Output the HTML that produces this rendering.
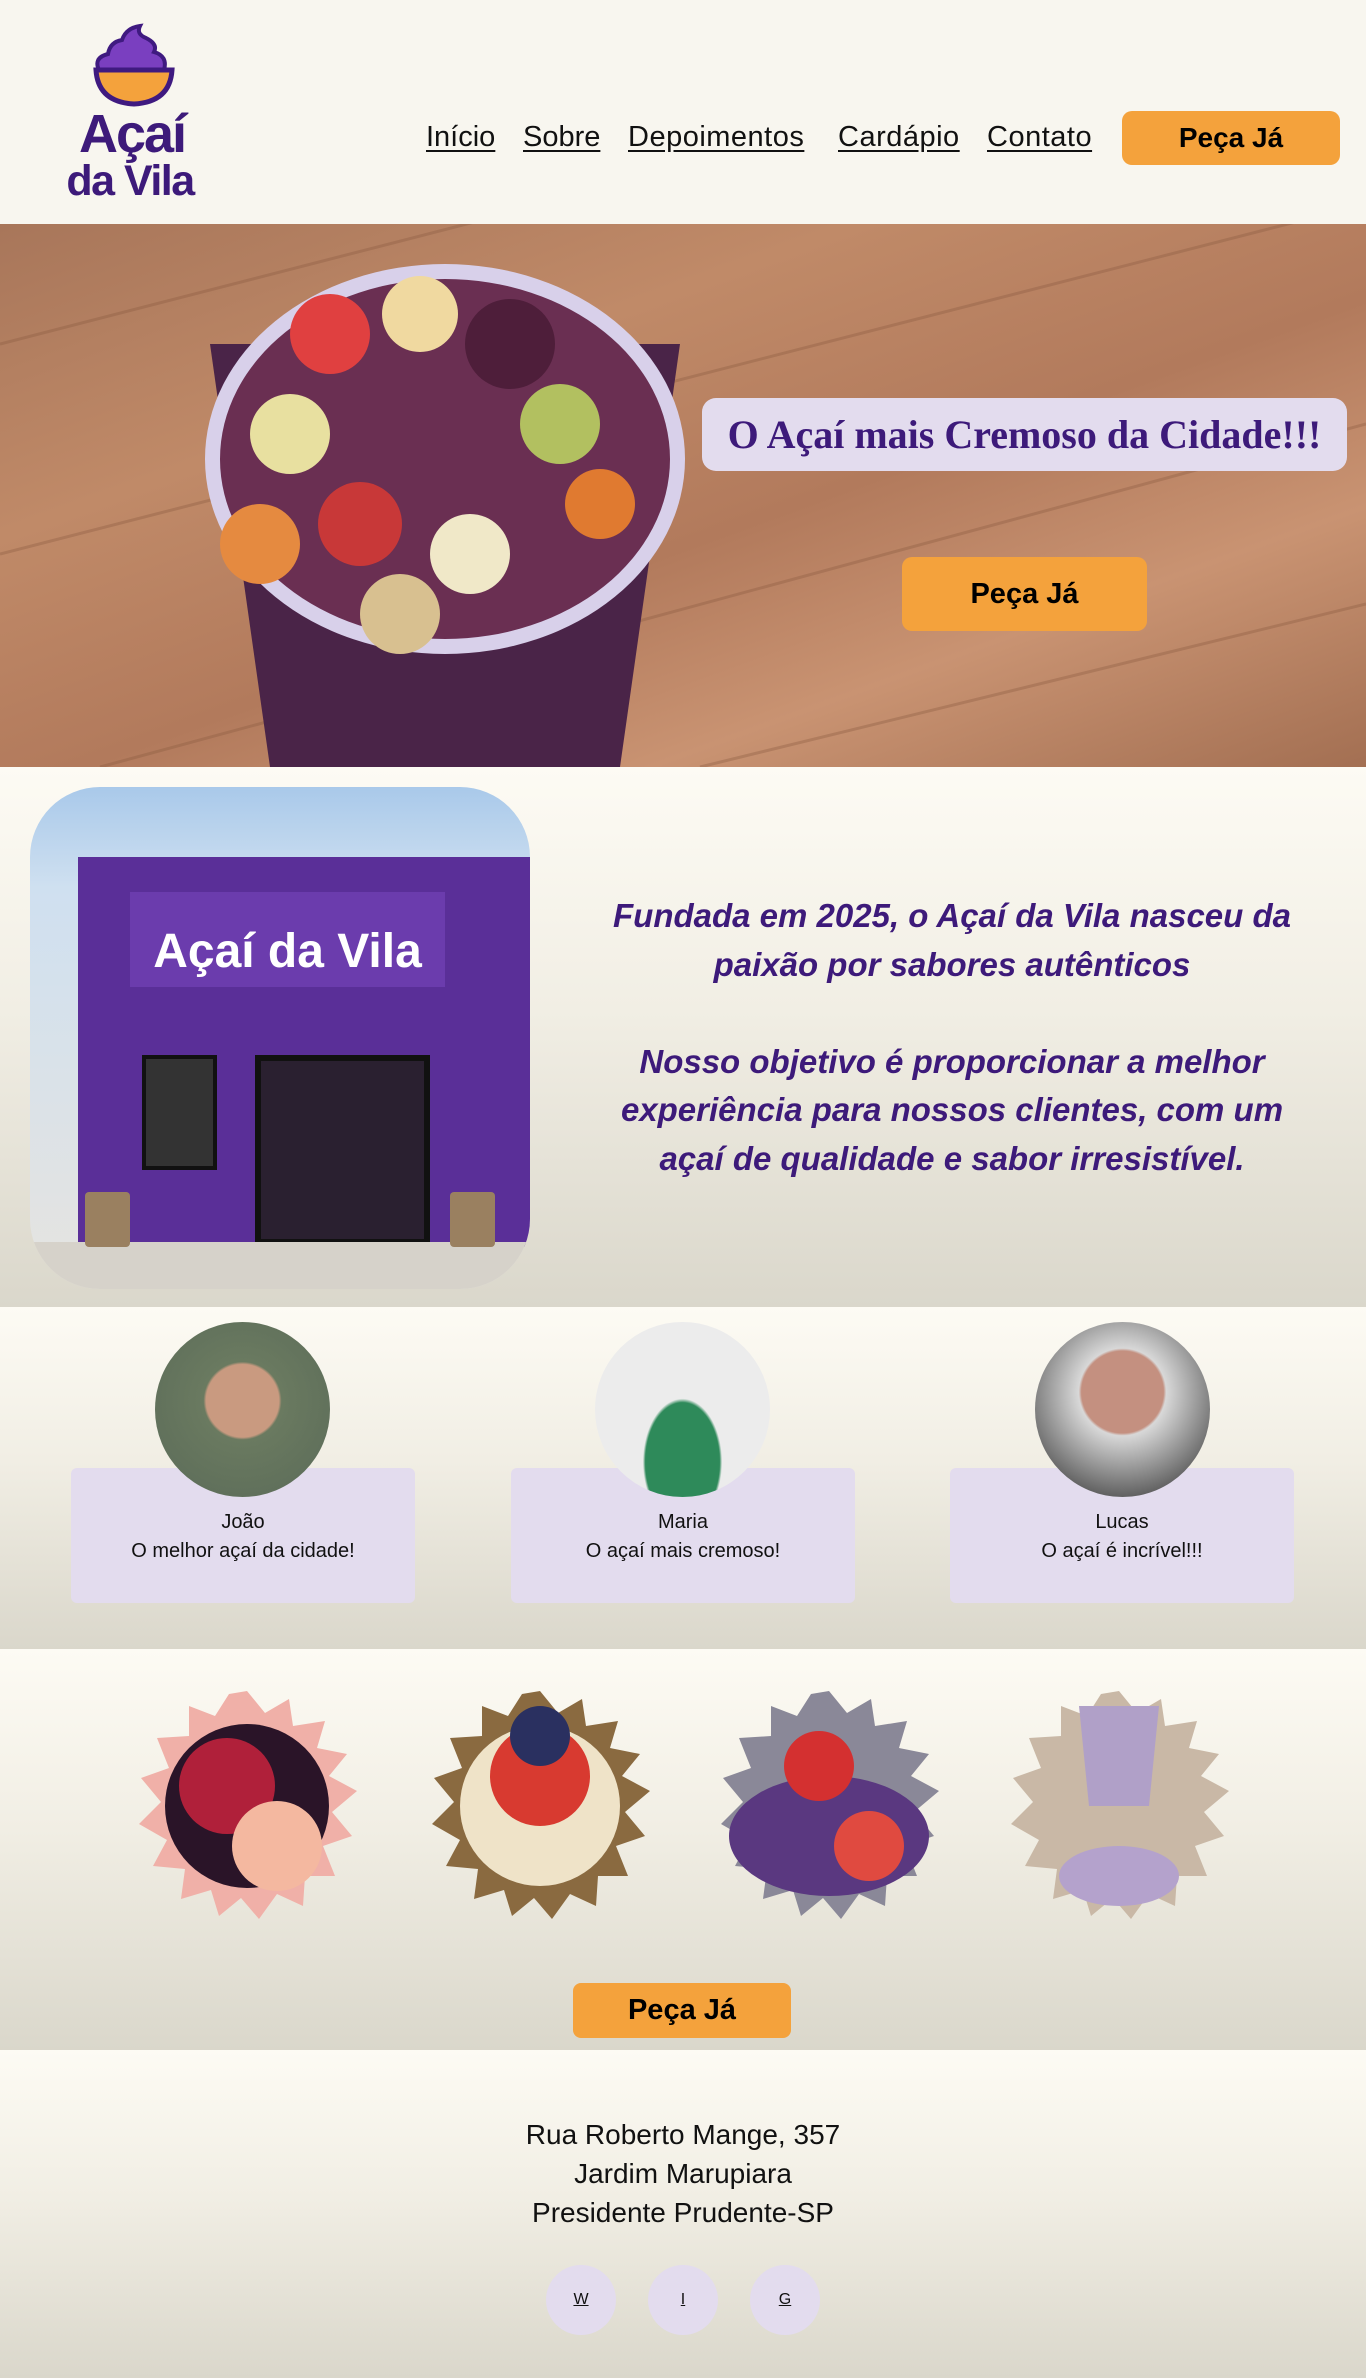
<!DOCTYPE html>
<html><head><meta charset="utf-8">
<style>
*{margin:0;padding:0;box-sizing:border-box}
body{width:1366px;height:2378px;overflow:hidden;font-family:"Liberation Sans",sans-serif;background:#fbf9f3;color:#000}
.sec{position:absolute;left:0;width:1366px}
nav a{position:absolute;top:121px;font-size:29px;color:#111;text-decoration:underline;text-underline-offset:4px}
.btn{position:absolute;background:#f4a23c;border-radius:10px;font-weight:bold;color:#000;display:flex;align-items:center;justify-content:center}
.hero{top:224px;height:543px;overflow:hidden;background:linear-gradient(160deg,#a8765a 0%,#c08a68 30%,#b27a5c 55%,#c99372 75%,#a36f52 100%)}
.grad{background:linear-gradient(180deg,#fdfbf4 0%,#f1eee4 45%,#dad7cb 100%)}
.card{position:absolute;top:1468px;width:344px;height:135px;background:#e3dcee;border-radius:6px;text-align:center;font-size:20px;line-height:29px;padding-top:40px;color:#111}
.av{position:absolute;top:1322px;width:175px;height:175px;border-radius:50%;overflow:hidden}
.soc{position:absolute;top:2265px;width:70px;height:70px;border-radius:50%;background:#e3dcee;display:flex;align-items:center;justify-content:center;font-size:16px;text-decoration:underline;color:#111}
</style></head><body>

<div class="sec" style="top:0;height:224px;background:#f8f6ef"></div>
<svg style="position:absolute;left:60px;top:20px" width="150" height="180" viewBox="0 0 150 180">
<path d="M40 52 Q32 38 48 34 Q50 22 62 20 Q66 8 80 6 Q76 14 86 18 Q98 24 94 32 Q108 36 104 50 Z" fill="#7a3fc0" stroke="#3f1a80" stroke-width="4"/>
<path d="M36 50 H112 Q110 82 74 84 Q38 82 36 50 Z" fill="#f4a23c" stroke="#3f1a80" stroke-width="5"/>
<text x="72" y="132" text-anchor="middle" font-family="Liberation Sans" font-weight="bold" font-size="54" letter-spacing="-2" fill="#3d1a7a">Açaí</text>
<text x="70" y="175" text-anchor="middle" font-family="Liberation Sans" font-weight="bold" font-size="43" letter-spacing="-1.5" fill="#3d1a7a">da Vila</text>
</svg>
<nav>
<a style="left:426px">Início</a>
<a style="left:523px">Sobre</a>
<a style="left:628px;letter-spacing:0.5px">Depoimentos</a>
<a style="left:838px;letter-spacing:0.5px">Cardápio</a>
<a style="left:987px;letter-spacing:0.5px">Contato</a>
</nav>
<div class="btn" style="left:1122px;top:111px;width:218px;height:54px;font-size:28px">Peça Já</div>

<div class="sec hero">
<svg width="1366" height="543" style="position:absolute;left:0;top:0">
<g stroke="#8a5a40" stroke-width="3" opacity=".35"><line x1="0" y1="120" x2="700" y2="-60"/><line x1="0" y1="330" x2="1366" y2="-20"/><line x1="100" y1="543" x2="1366" y2="200"/><line x1="700" y1="543" x2="1366" y2="380"/></g>
<path d="M210 120 L680 120 L620 543 L270 543 Z" fill="#4a2448"/>
<ellipse cx="445" cy="235" rx="240" ry="195" fill="#d8d0ea"/>
<ellipse cx="445" cy="235" rx="225" ry="180" fill="#6a2f52"/>
<circle cx="330" cy="110" r="40" fill="#e04040"/><circle cx="420" cy="90" r="38" fill="#f0d9a0"/><circle cx="510" cy="120" r="45" fill="#4e1e3a"/>
<circle cx="290" cy="210" r="40" fill="#e8e0a0"/><circle cx="360" cy="300" r="42" fill="#c83838"/><circle cx="560" cy="200" r="40" fill="#b2c060"/>
<circle cx="260" cy="320" r="40" fill="#e58a40"/><circle cx="470" cy="330" r="40" fill="#f0e8c8"/><circle cx="600" cy="280" r="35" fill="#e07a30"/><circle cx="400" cy="390" r="40" fill="#d8c090"/>
</svg>
<div style="position:absolute;left:702px;top:174px;width:645px;height:73px;background:#e3dcee;border-radius:14px;display:flex;align-items:center;justify-content:center;font-family:'Liberation Serif',serif;font-weight:bold;font-size:40px;color:#3d1a7a">O Açaí mais Cremoso da Cidade!!!</div>
<div class="btn" style="left:902px;top:333px;width:245px;height:74px;font-size:29px">Peça Já</div>
</div>

<div class="sec grad" style="top:767px;height:540px"></div>
<div style="position:absolute;left:30px;top:787px;width:500px;height:502px;border-radius:70px;overflow:hidden;background:linear-gradient(180deg,#a9c9ea 0%,#cfe0f0 20%,#e6e4e0 100%)">
<div style="position:absolute;left:48px;top:70px;width:455px;height:390px;background:#5a2f98"></div>
<div style="position:absolute;left:100px;top:105px;width:315px;height:95px;background:#6b3cad;color:#fff;font-weight:bold;font-size:48px;display:flex;align-items:flex-end;justify-content:center;padding-bottom:8px">Açaí da Vila</div>
<div style="position:absolute;left:225px;top:268px;width:175px;height:190px;background:#2a2030;border:6px solid #111"></div>
<div style="position:absolute;left:112px;top:268px;width:75px;height:115px;background:#333;border:4px solid #111"></div>
<div style="position:absolute;left:0;top:455px;width:500px;height:47px;background:#d6d2ca"></div>
<div style="position:absolute;left:55px;top:405px;width:45px;height:55px;background:#9a8060;border-radius:4px"></div>
<div style="position:absolute;left:420px;top:405px;width:45px;height:55px;background:#9a8060;border-radius:4px"></div>
</div>
<div style="position:absolute;left:597px;top:892px;width:710px;text-align:center;color:#3d1a7a;font-weight:bold;font-style:italic;font-size:33px;line-height:48.5px">Fundada em 2025, o Açaí da Vila nasceu da paixão por sabores autênticos<br><br>Nosso objetivo é proporcionar a melhor experiência para nossos clientes, com um açaí de qualidade e sabor irresistível.</div>

<div class="sec grad" style="top:1307px;height:342px"></div>
<div class="card" style="left:71px">João<br>O melhor açaí da cidade!</div>
<div class="card" style="left:511px">Maria<br>O açaí mais cremoso!</div>
<div class="card" style="left:950px">Lucas<br>O açaí é incrível!!!</div>
<div class="av" style="left:155px;background:radial-gradient(circle at 50% 45%,#c99a80 0 28%,#6a7a60 30%,#5a6a58 100%)"></div>
<div class="av" style="left:595px;background:radial-gradient(ellipse at 50% 80%,#2e8a5a 0 30%,#ececec 32%)"></div>
<div class="av" style="left:1035px;background:radial-gradient(circle at 50% 40%,#c49080 0 30%,#d8d8d8 32%,#222 100%)"></div>

<div class="sec grad" style="top:1649px;height:401px"></div>
<svg width="1366" height="260" style="position:absolute;left:0;top:1676px">
<defs><polygon id="s" points="0,-115 18,-93 42,-107 46,-80 78,-85 70,-58 100,-52 82,-30 110,-15 85,6 105,30 76,40 88,70 58,70 56,100 30,88 12,113 -6,92 -28,110 -36,84 -66,93 -62,63 -94,60 -80,34 -108,18 -86,-4 -106,-28 -78,-38 -90,-68 -58,-70 -58,-100 -32,-90 -18,-112"/></defs>
<g transform="translate(247,130)"><use href="#s" fill="#f0b0a8"/><circle r="82" fill="#2a1428"/><circle cx="-20" cy="-20" r="48" fill="#b0203a"/><circle cx="30" cy="40" r="45" fill="#f4b8a0"/></g>
<g transform="translate(540,130)"><use href="#s" fill="#8a6a40"/><circle r="80" fill="#efe3c8"/><circle cy="-30" r="50" fill="#d83a30"/><circle cy="-70" r="30" fill="#2a3060"/></g>
<g transform="translate(829,130)"><use href="#s" fill="#8a8898"/><ellipse cy="30" rx="100" ry="60" fill="#5a3880"/><circle cx="-10" cy="-40" r="35" fill="#d43030"/><circle cx="40" cy="40" r="35" fill="#e04a40"/></g>
<g transform="translate(1119,130)"><use href="#s" fill="#c9b8a6"/><path d="M-40 -100 L40 -100 L30 0 L-30 0 Z" fill="#b0a0c8"/><ellipse cy="70" rx="60" ry="30" fill="#b4a2cc"/></g>
</svg>
<div class="btn" style="left:573px;top:1983px;width:218px;height:55px;font-size:29px;border-radius:8px">Peça Já</div>

<div class="sec grad" style="top:2050px;height:328px"></div>
<div style="position:absolute;left:0;top:2115px;width:1366px;text-align:center;font-size:28px;line-height:39px;color:#111">Rua Roberto Mange, 357<br>Jardim Marupiara<br>Presidente Prudente-SP</div>
<div class="soc" style="left:546px">W</div>
<div class="soc" style="left:648px">I</div>
<div class="soc" style="left:750px">G</div>
</body></html>
